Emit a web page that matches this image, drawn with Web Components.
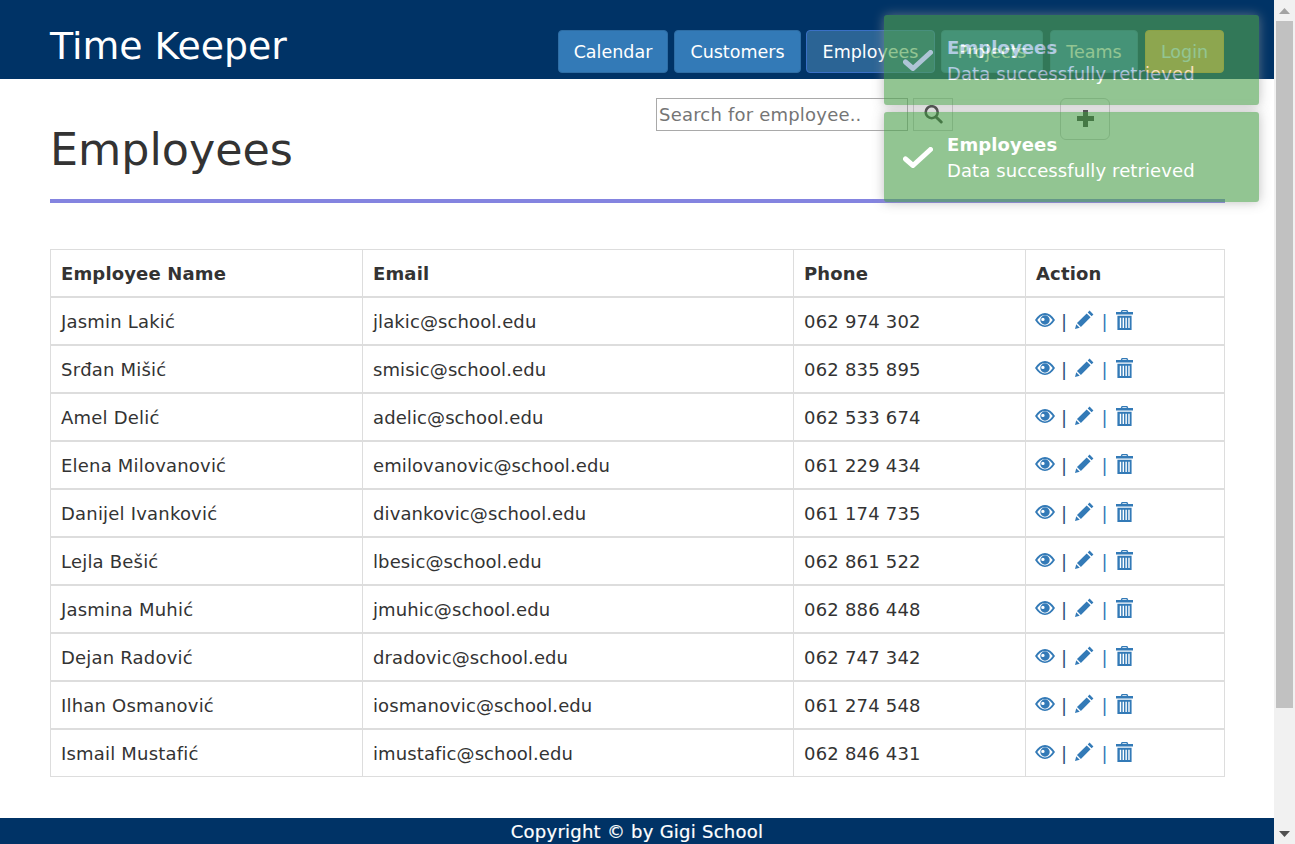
<!DOCTYPE html>
<html>
<head>
<meta charset="utf-8">
<title>Time Keeper</title>
<style>
  html, body { margin: 0; padding: 0; height: 100%; overflow: hidden; }
  body { font-family: "DejaVu Sans", Verdana, sans-serif; color: #333; background: #fff; }
</style>
</head>
<body>
<tk-app>
  <tk-header slot="header" brand="Time Keeper">
    <nav-btn style="width:110px">Calendar</nav-btn>
    <nav-btn style="width:127px">Customers</nav-btn>
    <nav-btn style="width:129px;margin-left:-1px" active>Employees</nav-btn>
    <nav-btn style="width:102px">Projects</nav-btn>
    <nav-btn style="width:88px;margin-left:1px">Teams</nav-btn>
    <nav-btn style="width:79px;margin-left:1px" kind="warning">Login</nav-btn>
  </tk-header>

  <employees-page>
    <emp-row head><span slot="name">Employee Name</span><span slot="email">Email</span><span slot="phone">Phone</span></emp-row>
    <emp-row><span slot="name">Jasmin Lakić</span><span slot="email">jlakic@school.edu</span><span slot="phone">062 974 302</span></emp-row>
    <emp-row><span slot="name">Srđan Mišić</span><span slot="email">smisic@school.edu</span><span slot="phone">062 835 895</span></emp-row>
    <emp-row><span slot="name">Amel Delić</span><span slot="email">adelic@school.edu</span><span slot="phone">062 533 674</span></emp-row>
    <emp-row><span slot="name">Elena Milovanović</span><span slot="email">emilovanovic@school.edu</span><span slot="phone">061 229 434</span></emp-row>
    <emp-row><span slot="name">Danijel Ivanković</span><span slot="email">divankovic@school.edu</span><span slot="phone">061 174 735</span></emp-row>
    <emp-row><span slot="name">Lejla Bešić</span><span slot="email">lbesic@school.edu</span><span slot="phone">062 861 522</span></emp-row>
    <emp-row><span slot="name">Jasmina Muhić</span><span slot="email">jmuhic@school.edu</span><span slot="phone">062 886 448</span></emp-row>
    <emp-row><span slot="name">Dejan Radović</span><span slot="email">dradovic@school.edu</span><span slot="phone">062 747 342</span></emp-row>
    <emp-row><span slot="name">Ilhan Osmanović</span><span slot="email">iosmanovic@school.edu</span><span slot="phone">061 274 548</span></emp-row>
    <emp-row><span slot="name">Ismail Mustafić</span><span slot="email">imustafic@school.edu</span><span slot="phone">062 846 431</span></emp-row>
  </employees-page>

  <tk-footer slot="footer">Copyright © by Gigi School</tk-footer>

  <toast-stack slot="overlay">
    <tk-toast title="Employees">Data successfully retrieved</tk-toast>
    <tk-toast title="Employees">Data successfully retrieved</tk-toast>
  </toast-stack>
</tk-app>

<script>
const appTemplate = document.createElement("template");
appTemplate.innerHTML = `
<style>
  :host { display: flex; height: 844px; position: relative; overflow: hidden; }
  .main { flex: 1; min-width: 0; display: flex; flex-direction: column; }
  .content { flex: 1; min-height: 0; }
  .bar { width: 21px; background: #f1f1f1; display: flex; flex-direction: column; align-items: center; flex: none; }
  .arrow { height: 21px; width: 100%; display: flex; align-items: center; justify-content: center; flex: none; }
  .thumb { width: 17px; height: 687px; background: #c1c1c1; flex: none; }
  .spacer { flex: 1; }
  svg { display: block; }
</style>
<div class="main">
  <slot name="header"></slot>
  <div class="content"><slot></slot></div>
  <slot name="footer"></slot>
</div>
<div class="bar">
  <div class="arrow"><svg width="11" height="6" viewBox="0 0 11 6"><path d="M5.5 0L11 6H0z" fill="#a3a3a3"/></svg></div>
  <div class="thumb"></div>
  <div class="spacer"></div>
  <div class="arrow"><svg width="11" height="6" viewBox="0 0 11 6"><path d="M0 0H11L5.5 6z" fill="#505050"/></svg></div>
</div>
<slot name="overlay"></slot>
`;
class TkApp extends HTMLElement {
  constructor() {
    super();
    this.attachShadow({mode: "open"});
    this.shadowRoot.appendChild(appTemplate.content.cloneNode(true));
  }
}
customElements.define("tk-app", TkApp);

const headerTemplate = document.createElement("template");
headerTemplate.innerHTML = `
<style>
  :host { display: flex; height: 79px; background: #003366; padding: 0 50px 0 50px; box-sizing: border-box; flex: none; justify-content: space-between; }
  .brand { font-size: 37.8px; line-height: 45px; color: #fff; margin-top: 24px; white-space: nowrap; }
  nav { display: flex; gap: 6px; padding-top: 30px; }
</style>
<div class="brand"></div>
<nav><slot></slot></nav>
`;
class TkHeader extends HTMLElement {
  constructor() {
    super();
    this.attachShadow({mode: "open"});
    this.shadowRoot.appendChild(headerTemplate.content.cloneNode(true));
  }
  connectedCallback() {
    this.shadowRoot.querySelector(".brand").textContent = this.getAttribute("brand");
  }
}
customElements.define("tk-header", TkHeader);

const navBtnTemplate = document.createElement("template");
navBtnTemplate.innerHTML = `
<style>
  :host { display: flex; height: 43px; align-items: center; justify-content: center; box-sizing: border-box; border-radius: 4px; border: 1px solid #2e6da4; background: #337ab7; color: #fff; font-size: 17.5px; white-space: nowrap; }
  :host([active]) { background: #2b6495; border-color: #3a70c6; }
  :host([kind="warning"]) { background: #f0ad4e; border-color: #eea236; }
</style>
<slot></slot>
`;
class NavBtn extends HTMLElement {
  constructor() {
    super();
    this.attachShadow({mode: "open"});
    this.shadowRoot.appendChild(navBtnTemplate.content.cloneNode(true));
  }
}
customElements.define("nav-btn", NavBtn);

const pageTemplate = document.createElement("template");
pageTemplate.innerHTML = `
<style>
  :host { display: block; padding: 19px 49px 0 50px; }
  .top { display: flex; height: 101px; border-bottom: 4px solid #8484e0; box-sizing: content-box; justify-content: space-between; }
  h1 { margin: 25px 0 0; font-size: 44.4px; line-height: 54px; font-weight: 400; color: #333; }
  .tools { display: flex; align-items: flex-start; margin-right: 115px; }
  input { width: 252px; height: 33px; box-sizing: border-box; border: 1px solid #a9a9a9; padding: 0 2px; font: 18px "DejaVu Sans", sans-serif; letter-spacing: 0.2px; color: #333; outline: none; }
  input::placeholder { color: #757575; opacity: 1; }
  button { background: #fff; padding: 0; display: flex; align-items: center; justify-content: center; box-sizing: border-box; }
  .search { width: 40px; height: 33px; margin-left: 5px; border: 1px solid #ccc; }
  .add { width: 50px; height: 42px; margin-left: 107px; border: 1px solid #ccc; border-radius: 6px; }
  .add svg { margin-bottom: 2px; }
  .table { margin-top: 46px; }
</style>
<div class="top">
  <h1>Employees</h1>
  <div class="tools">
    <input type="text" placeholder="Search for employee..">
    <button class="search" aria-label="Search"><svg width="20" height="20" viewBox="0 0 20 20"><circle cx="8.700" cy="7.200" r="6" fill="none" stroke="#333" stroke-width="2.600"/><path d="M13 12l5.200 5" stroke="#333" stroke-width="3" stroke-linecap="round"/></svg></button>
    <button class="add" aria-label="Add"><svg width="17" height="17" viewBox="0 0 17 17"><path d="M6 0h5v6h6v5h-6v6H6v-6H0V6h6z" fill="#333"/></svg></button>
  </div>
</div>
<div class="table"><slot></slot></div>
`;
class EmployeesPage extends HTMLElement {
  constructor() {
    super();
    this.attachShadow({mode: "open"});
    this.shadowRoot.appendChild(pageTemplate.content.cloneNode(true));
  }
}
customElements.define("employees-page", EmployeesPage);

const rowTemplate = document.createElement("template");
rowTemplate.innerHTML = `
<style>
  :host { display: grid; grid-template-columns: 312px 431px 232px 200px; height: 48px; font-size: 18px; color: #333; }
  .cell { display: flex; align-items: center; padding: 0 10px; box-sizing: border-box; border-top: 1px solid #ddd; border-bottom: 1px solid #ddd; border-left: 1px solid #ddd; white-space: nowrap; }
  .cell:last-child { border-right: 1px solid #ddd; }
  .name { letter-spacing: 0.2px; }
  .email { letter-spacing: 0.1px; }
  .phone { letter-spacing: 0.2px; }
  :host([head]) { font-weight: 700; letter-spacing: 0.15px; }
  :host([head]) .cell { letter-spacing: 0.15px; }
  .actions { padding: 0 0 0 9px; }
  .actions svg { display: block; flex: none; fill: #337ab7; }
  .sep { width: 21px; text-align: center; color: #337ab7; font-size: 18px; line-height: 20px; padding-top: 5px; }
  .sep.dark { color: #2c4f77; }
  .icons { display: flex; align-items: center; margin-top: -3px; }
</style>
<div class="cell name"><slot name="name"></slot></div>
<div class="cell email"><slot name="email"></slot></div>
<div class="cell phone"><slot name="phone"></slot></div>
<div class="cell actions"></div>
`;
const actionIcons = `
<div class="icons">
<svg width="20" height="16" viewBox="0 0 20 16" style="margin-right:-1px"><path fill-rule="evenodd" d="M0 8C2.800 3.400 6.400 1 10 1s7.200 2.400 10 7c-2.800 4.600-6.400 7-10 7S2.800 12.600 0 8zM2.300 8c2.200 3.200 4.900 5.400 7.700 5.400s5.500-2.200 7.700-5.400C15.500 4.800 12.800 2.900 10 2.900S4.500 4.800 2.300 8z"/><path fill-rule="evenodd" d="M10 3.300a4.700 4.700 0 1 1 0 9.400 4.700 4.700 0 0 1 0-9.400zM7.900 5.700a1.700 1.700 0 1 0 0 3.400 1.700 1.700 0 0 0 0-3.400z"/></svg>
<div class="sep dark" style="width:20px">|</div>
<svg width="19" height="19" viewBox="0 0 20 20" style="margin-left:1px"><path d="M15.300 0.600l4.100 4.100-1.900 1.900-4.100-4.100zM12.300 3.600l4.100 4.100L6.200 17.900l-4.100-4.100zM1.300 15l3.700 3.700L0 20z"/></svg>
<div class="sep">|</div>
<svg width="17" height="20" viewBox="0 0 18 21" style="margin-left:1px"><path fill-rule="evenodd" d="M6 0h6l1 2h5v2.600H0V2h5zM7 1.200l-.5 .9h5l-.5-.9zM1.500 6h15v15h-15zM4 8v11h1.500V8zM7 8v11h1.500V8zM10 8v11h1.500V8zM13 8v11h1.500V8z"/></svg>
</div>
`;
class EmpRow extends HTMLElement {
  constructor() {
    super();
    this.attachShadow({mode: "open"});
    this.shadowRoot.appendChild(rowTemplate.content.cloneNode(true));
  }
  connectedCallback() {
    const cell = this.shadowRoot.querySelector(".actions");
    if (this.hasAttribute("head")) {
      cell.textContent = "Action";
      cell.style.paddingLeft = "10px";
    } else {
      cell.innerHTML = actionIcons;
    }
  }
}
customElements.define("emp-row", EmpRow);

const footerTemplate = document.createElement("template");
footerTemplate.innerHTML = `
<style>
  :host { display: block; height: 26px; line-height: 28px; background: #003366; color: #fff; text-align: center; font-size: 18px; letter-spacing: 0.25px; flex: none; -webkit-text-stroke: 0.2px #fff; }
</style>
<slot></slot>
`;
class TkFooter extends HTMLElement {
  constructor() {
    super();
    this.attachShadow({mode: "open"});
    this.shadowRoot.appendChild(footerTemplate.content.cloneNode(true));
  }
}
customElements.define("tk-footer", TkFooter);

const stackTemplate = document.createElement("template");
stackTemplate.innerHTML = `
<style>
  :host { position: absolute; top: 15px; right: 36px; width: 375px; display: flex; flex-direction: column; gap: 7px; }
</style>
<slot></slot>
`;
class ToastStack extends HTMLElement {
  constructor() {
    super();
    this.attachShadow({mode: "open"});
    this.shadowRoot.appendChild(stackTemplate.content.cloneNode(true));
  }
}
customElements.define("toast-stack", ToastStack);

const toastTemplate = document.createElement("template");
toastTemplate.innerHTML = `
<style>
  :host { display: flex; height: 90px; box-sizing: border-box; padding: 20px 15px 0 63px; position: relative; background: #51a351; color: #fff; opacity: 0.62; border-radius: 3px; box-shadow: 0 0 12px #999; font-size: 18px; letter-spacing: 0.1px; line-height: 26px; }
  .check { position: absolute; left: 19px; top: 35px; }
  .title { font-weight: 700; }
</style>
<svg class="check" width="30" height="21" viewBox="0 0 30 21"><path d="M2.500 12L10 18.500L27.500 2.500" fill="none" stroke="#fff" stroke-width="5" stroke-linecap="round" stroke-linejoin="round"/></svg>
<div>
  <div class="title"></div>
  <div><slot></slot></div>
</div>
`;
class TkToast extends HTMLElement {
  constructor() {
    super();
    this.attachShadow({mode: "open"});
    this.shadowRoot.appendChild(toastTemplate.content.cloneNode(true));
  }
  connectedCallback() {
    this.shadowRoot.querySelector(".title").textContent = this.getAttribute("title");
  }
}
customElements.define("tk-toast", TkToast);
</script>
</body>
</html>
